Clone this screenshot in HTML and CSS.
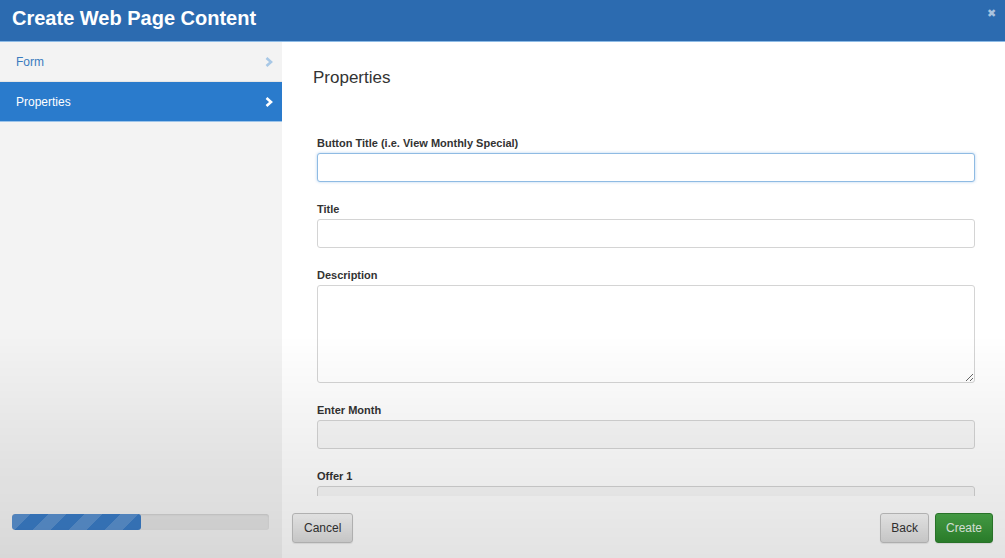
FILE: index.html
```html
<!DOCTYPE html>
<html lang="en">
<head>
    <meta charset="UTF-8">
    <meta name="viewport" content="width=device-width, initial-scale=1.0">
    <title>Create Web Page Content</title>
    <link rel="stylesheet" href="styles.css">
</head>
<body>
    <div class="dialog">
        <div class="header">
            <h1>Create Web Page Content</h1>
            <span class="close">&#x2716;</span>
        </div>
        <div class="body">
            <div class="sidebar">
                <div class="step">
                    <span>Form</span>
                    <svg class="chev" width="8" height="10" viewBox="0 0 8 10"><path d="M1.5 1 L6 5 L1.5 9" fill="none" stroke="currentColor" stroke-width="2.6"/></svg>
                </div>
                <div class="step active">
                    <span>Properties</span>
                    <svg class="chev" width="8" height="10" viewBox="0 0 8 10"><path d="M1.5 1 L6 5 L1.5 9" fill="none" stroke="currentColor" stroke-width="2.6"/></svg>
                </div>
                <div class="spacer"></div>
                <div class="progress">
                    <div class="bar" style="width: 50%"></div>
                </div>
            </div>
            <div class="main">
                <div class="content">
                    <h2>Properties</h2>
                    <form class="fields">
                        <div class="field">
                            <label>Button Title (i.e. View Monthly Special)</label>
                            <input type="text" class="focus">
                        </div>
                        <div class="field">
                            <label>Title</label>
                            <input type="text">
                        </div>
                        <div class="field">
                            <label>Description</label>
                            <textarea></textarea>
                        </div>
                        <div class="field">
                            <label>Enter Month</label>
                            <input type="text" class="muted">
                        </div>
                        <div class="field">
                            <label>Offer 1</label>
                            <input type="text" class="muted">
                        </div>
                    </form>
                </div>
                <div class="footer">
                    <button class="btn">Cancel</button>
                    <div class="right">
                        <button class="btn">Back</button>
                        <button class="btn primary">Create</button>
                    </div>
                </div>
            </div>
        </div>
    </div>
</body>
</html>
```

FILE: styles.css
```css
body {
    margin: 0;
    font-family: "Liberation Sans", Arial, sans-serif;
    background: #ffffff;
    overflow: hidden;
}
body::after {
    content: "";
    position: fixed;
    left: 0;
    right: 0;
    top: 0;
    bottom: 0;
    pointer-events: none;
    background: linear-gradient(to bottom, rgba(0,0,0,0) 60%, rgba(0,0,0,0.06) 80%, rgba(0,0,0,0.11) 100%);
}
.dialog {
    width: 1005px;
    height: 558px;
    display: flex;
    flex-direction: column;
}
.header {
    height: 42px;
    background: #2c6bb0;
    border-bottom: 1px solid #8dbbe6;
    display: flex;
    justify-content: space-between;
    align-items: center;
    padding: 0 9px 0 12px;
    box-sizing: border-box;
    flex: none;
}
.header h1 {
    margin: 0;
    color: #ffffff;
    font-size: 20px;
    font-weight: bold;
    margin-top: -4px;
}
.close {
    color: #a9c3df;
    font-size: 11px;
    align-self: flex-start;
    margin-top: 7px;
}
.body {
    flex: 1;
    display: flex;
    min-height: 0;
}
.sidebar {
    width: 282px;
    background: #f3f3f3;
    display: flex;
    flex-direction: column;
    flex: none;
}
.step {
    height: 40px;
    box-sizing: border-box;
    display: flex;
    align-items: center;
    justify-content: space-between;
    padding: 0 9px 0 16px;
    font-size: 12px;
    color: #3a7bbf;
    border-bottom: 1px solid #e6e6e6;
}
.step .chev {
    color: #a8c8e6;
}
.step.active {
    background: #2a7bcc;
    color: #ffffff;
    border-bottom: 1px solid #9cc4ea;
}
.step.active .chev {
    color: #ffffff;
}
.spacer {
    flex: 1;
}
.progress {
    margin: 0 13px 28px 12px;
    height: 16px;
    background: #e4e4e4;
    border-radius: 3px;
    box-shadow: inset 0 1px 2px rgba(0,0,0,0.1);
    overflow: hidden;
}
.bar {
    height: 100%;
    border-radius: 3px;
    background-color: #3a7cc6;
    background-image: linear-gradient(135deg, rgba(255,255,255,0.16) 25%, transparent 25%, transparent 50%, rgba(255,255,255,0.16) 50%, rgba(255,255,255,0.16) 75%, transparent 75%, transparent);
    background-size: 36px 36px;
}
.main {
    flex: 1;
    display: flex;
    flex-direction: column;
    min-width: 0;
}
.content {
    flex: 1;
    overflow: hidden;
    padding: 26px 30px 0 31px;
}
.content h2 {
    margin: 0 0 49px 0;
    font-size: 17px;
    font-weight: normal;
    color: #333333;
    line-height: 20px;
}
.fields {
    margin-left: 4px;
}
.field {
    display: flex;
    flex-direction: column;
    gap: 3px;
    margin-bottom: 21px;
}
.field label {
    font-size: 11px;
    font-weight: bold;
    color: #333333;
    line-height: 13px;
}
.field input,
.field textarea {
    height: 29px;
    box-sizing: border-box;
    border: 1px solid #d4d4d4;
    border-radius: 3px;
    background: #ffffff;
    font-family: inherit;
    margin: 0;
}
.field textarea {
    height: 98px;
    resize: vertical;
}
.field input.focus {
    border-color: #8fbbe3;
    box-shadow: 0 0 3px rgba(82, 150, 220, 0.45);
}
.field input.muted {
    background: #f8f8f8;
}
.footer {
    height: 60px;
    flex: none;
    display: flex;
    align-items: center;
    justify-content: space-between;
    padding: 2px 12px 0 10px;
}
.right {
    display: flex;
    gap: 6px;
}
.btn {
    height: 30px;
    padding: 0 11px;
    font-family: inherit;
    font-size: 12px;
    color: #333333;
    background: linear-gradient(#f7f7f7, #dcdcdc);
    border: 1px solid #c2c2c2;
    border-radius: 3px;
    box-shadow: 0 1px 1px rgba(0,0,0,0.08);
}
.right .btn {
    padding: 0 10px;
}
.btn.primary {
    color: #e8f5e8;
    background: linear-gradient(#4aa84a, #2f8a2f);
    border-color: #2d7f2d;
}
```
